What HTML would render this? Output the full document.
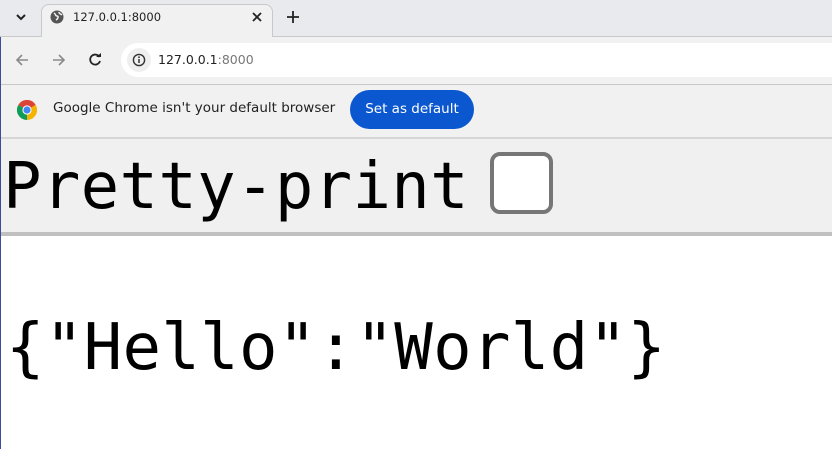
<!DOCTYPE html>
<html><head><meta charset="utf-8"><style>
*{margin:0;padding:0;box-sizing:border-box}
body{width:832px;height:449px;overflow:hidden;background:#fff;position:relative;font-family:"DejaVu Sans",sans-serif}
.abs{position:absolute}
.mono{font-family:"DejaVu Sans Mono",monospace;font-size:64px;line-height:75px;color:#000;white-space:pre;letter-spacing:0.3px}
</style></head><body>
<div class="abs" style="left:0;top:0;width:832px;height:37px;background:#e8eaed"></div>
<div class="abs" style="left:41px;top:4px;width:232px;height:34px;background:#f1f1f1;border:1px solid #c8c8c8;border-bottom:none;border-radius:8px 8px 0 0"></div>
<div class="abs" style="left:0;top:36px;width:832px;height:48px;background:#f1f1f1;border-top:1px solid #c8c8c8"></div>
<div class="abs" style="left:42px;top:35px;width:230px;height:3px;background:#f1f1f1"></div>
<svg class="abs" style="left:14px;top:12px" width="14" height="10"><path d="M3 3l4 4 4-4" stroke="#222" stroke-width="2" fill="none"/></svg>
<svg class="abs" style="left:50px;top:10px" width="14" height="14"><circle cx="7" cy="7" r="6.5" fill="#555"/><path d="M4 3c2 1 1 3 3 3s1 3-1 4M9 2c0 2 2 2 3 3" stroke="#f1f1f1" stroke-width="1.5" fill="none"/></svg>
<div class="abs" style="left:73px;top:10px;font-size:11.5px;color:#222">127.0.0.1:8000</div>
<svg class="abs" style="left:252px;top:12px" width="10" height="10"><path d="M1 1l8 8M9 1l-8 8" stroke="#222" stroke-width="1.8"/></svg>
<svg class="abs" style="left:287px;top:11px" width="12" height="12"><path d="M6 0v12M0 6h12" stroke="#222" stroke-width="1.8"/></svg>
<svg class="abs" style="left:14px;top:52px" width="16" height="16"><path d="M14 8H3M8 3L3 8l5 5" stroke="#8a8a8a" stroke-width="1.6" fill="none"/></svg>
<svg class="abs" style="left:51px;top:52px" width="16" height="16"><path d="M2 8h11M8 3l5 5-5 5" stroke="#8a8a8a" stroke-width="1.6" fill="none"/></svg>
<svg class="abs" style="left:87px;top:52px" width="16" height="16"><path d="M12.5 5A5 5 0 1 0 13 9" stroke="#222" stroke-width="1.8" fill="none"/><path d="M9 5h5V1z" fill="#222"/></svg>
<div class="abs" style="left:121px;top:43px;width:711px;height:34px;background:#fff;border-radius:17px 0 0 17px"></div>
<div class="abs" style="left:127px;top:48px;width:24px;height:24px;border-radius:12px;background:#efefef"></div>
<svg class="abs" style="left:132px;top:53px" width="14" height="14"><circle cx="7" cy="7" r="5.6" stroke="#333" stroke-width="1.4" fill="none"/><path d="M7 6v4" stroke="#333" stroke-width="1.5"/><circle cx="7" cy="4.2" r=".9" fill="#333"/></svg>
<div class="abs" style="left:158px;top:52px;font-size:12.5px;color:#222">127.0.0.1<span style="color:#777">:8000</span></div>
<div class="abs" style="left:0;top:84px;width:832px;height:53px;background:#f1f1f1;border-top:1px solid #c8c8c8"></div>
<svg class="abs" style="left:17px;top:100px" width="20" height="20" viewBox="0 0 20 20"><path d="M10 10L1.3 5A10 10 0 0 1 18.7 5z" fill="#db4437"/><path d="M10 10L18.7 5A10 10 0 0 1 10 20z" fill="#f4b400"/><path d="M10 10L10 20A10 10 0 0 1 1.3 5z" fill="#0f9d58"/><circle cx="10" cy="10" r="4.6" fill="#fff"/><circle cx="10" cy="10" r="3.6" fill="#4285f4"/></svg>
<div class="abs" style="left:53px;top:100px;font-size:13.5px;color:#222;white-space:nowrap">Google Chrome isn't your default browser</div>
<div class="abs" style="left:350px;top:90px;width:124px;height:39px;border-radius:20px;background:#0b57d0;color:#fff;font-size:13.5px;line-height:39px;text-align:center;white-space:nowrap">Set as default</div>
<div class="abs" style="left:0;top:137px;width:832px;height:95px;background:#f0f0f0;border-top:2px solid #d6d6d6"></div>
<div class="abs" style="left:0;top:232px;width:832px;height:4px;background:#c0c0c0"></div>
<div class="abs mono" style="left:3px;top:150px">Pretty-print</div>
<div class="abs" style="left:490px;top:152px;width:63px;height:62px;border:4px solid #767676;border-radius:10px;background:#fff"></div>
<div class="abs mono" style="left:6px;top:311px">{"Hello":"World"}</div>
<div class="abs" style="left:0;top:37px;width:1px;height:412px;background:#3c4aa0"></div>
</body></html>
